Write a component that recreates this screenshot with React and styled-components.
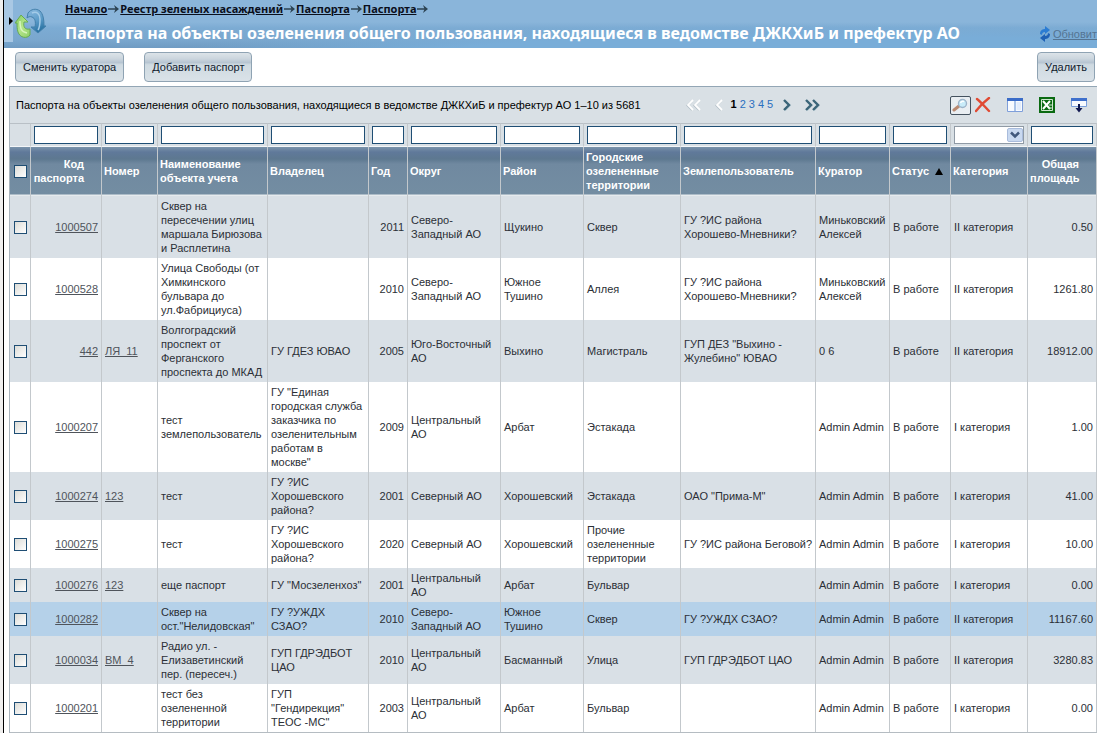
import React, { useState } from 'react'
import styled, { createGlobalStyle } from 'styled-components'

const columns = [
  { key: 'code', title: 'Код паспорта', width: 71, numeric: true },
  { key: 'number', title: 'Номер', width: 56 },
  { key: 'name', title: 'Наименование объекта учета', width: 110 },
  { key: 'owner', title: 'Владелец', width: 101 },
  { key: 'year', title: 'Год', width: 39, numeric: true },
  { key: 'okrug', title: 'Округ', width: 93 },
  { key: 'district', title: 'Район', width: 83 },
  { key: 'area', title: 'Городские озелененные территории', width: 97 },
  { key: 'landUser', title: 'Землепользователь', width: 135 },
  { key: 'curator', title: 'Куратор', width: 74 },
  { key: 'status', title: 'Статус', width: 61, sorted: true },
  { key: 'category', title: 'Категория', width: 77, select: true },
  { key: 'total', title: 'Общая площадь', width: 69, numeric: true },
]

const rows = [
  { code: '1000507', name: 'Сквер на пересечении улиц маршала Бирюзова и Расплетина', year: '2011', okrug: 'Северо-\nЗападный АО', district: 'Щукино', area: 'Сквер', landUser: 'ГУ ?ИС района\nХорошево-Мневники?', curator: 'Миньковский Алексей', category: 'II категория', total: '0.50' },
  { code: '1000528', name: 'Улица Свободы (от Химкинского бульвара до ул.Фабрициуса)', year: '2010', okrug: 'Северо-\nЗападный АО', district: 'Южное\nТушино', area: 'Аллея', landUser: 'ГУ ?ИС района\nХорошево-Мневники?', curator: 'Миньковский Алексей', category: 'II категория', total: '1261.80' },
  { code: '442', number: 'ЛЯ_11', name: 'Волгоградский\nпроспект от\nФерганского\nпроспекта до МКАД', owner: 'ГУ ГДЕЗ ЮВАО', year: '2005', okrug: 'Юго-Восточный\nАО', district: 'Выхино', area: 'Магистраль', landUser: 'ГУП ДЕЗ "Выхино -\nЖулебино" ЮВАО', curator: '0 6', category: 'II категория', total: '18912.00' },
  { code: '1000207', name: 'тест\nземлепользователь', owner: 'ГУ "Единая\nгородская служба\nзаказчика по\nозеленительным\nработам в\nмоскве"', year: '2009', okrug: 'Центральный\nАО', district: 'Арбат', area: 'Эстакада', curator: 'Admin Admin', category: 'I категория', total: '1.00' },
  { code: '1000274', number: '123', name: 'тест', owner: 'ГУ ?ИС\nХорошевского\nрайона?', year: '2001', okrug: 'Северный АО', district: 'Хорошевский', area: 'Эстакада', landUser: 'ОАО "Прима-М"', curator: 'Admin Admin', category: 'I категория', total: '41.00' },
  { code: '1000275', name: 'тест', owner: 'ГУ ?ИС\nХорошевского\nрайона?', year: '2020', okrug: 'Северный АО', district: 'Хорошевский', area: 'Прочие\nозелененные\nтерритории', landUser: 'ГУ ?ИС района Беговой?', curator: 'Admin Admin', category: 'I категория', total: '10.00' },
  { code: '1000276', number: '123', name: 'еще паспорт', owner: 'ГУ "Мосзеленхоз"', year: '2001', okrug: 'Центральный\nАО', district: 'Арбат', area: 'Бульвар', curator: 'Admin Admin', category: 'I категория', total: '0.00' },
  { code: '1000282', name: 'Сквер на\nост."Нелидовская"', owner: 'ГУ ?УЖДХ\nСЗАО?', year: '2010', okrug: 'Северо-\nЗападный АО', district: 'Южное\nТушино', area: 'Сквер', landUser: 'ГУ ?УЖДХ СЗАО?', curator: 'Admin Admin', category: 'II категория', total: '11167.60', active: true },
  { code: '1000034', number: 'ВМ_4', name: 'Радио ул. -\nЕлизаветинский\nпер. (пересеч.)', owner: 'ГУП ГДРЭДБОТ\nЦАО', year: '2010', okrug: 'Центральный\nАО', district: 'Басманный', area: 'Улица', landUser: 'ГУП ГДРЭДБОТ ЦАО', curator: 'Admin Admin', category: 'II категория', total: '3280.83' },
  { code: '1000201', name: 'тест без\nозелененной\nтерритории', owner: 'ГУП\n"Гендирекция"\nТЕОС -МС"', year: '2003', okrug: 'Центральный\nАО', district: 'Арбат', area: 'Бульвар', curator: 'Admin Admin', category: 'I категория', total: '0.00' },
]

const crumbs = ['Начало', 'Реестр зеленых насаждений', 'Паспорта', 'Паспорта']

const CrumbArrow = () => (
  <svg width="11" height="8" viewBox="0 0 11 8" aria-hidden="true">
    <path d="M0 4h9" fill="none" stroke="#2c4352" strokeWidth="1.5" />
    <path d="M6 0l5 4-5 4 1.500-4z" fill="#2c4352" />
  </svg>
)

const Logo = () => (
  <svg width="32" height="32" viewBox="0 0 32 32" aria-hidden="true">
    <defs>
      <linearGradient id="green" x1="0" y1="0" x2="1" y2="1">
        <stop offset="0" stopColor="#7cc95a" />
        <stop offset="0.5" stopColor="#b4e58a" />
        <stop offset="1" stopColor="#8fd069" />
      </linearGradient>
      <linearGradient id="blue" x1="0" y1="0" x2="0.4" y2="1">
        <stop offset="0" stopColor="#8dbbe0" />
        <stop offset="0.6" stopColor="#5b9bc8" />
        <stop offset="1" stopColor="#2b74a4" />
      </linearGradient>
    </defs>
    <path d="M13 5c3-4 8-5 12-2 3 3 4 8 4 15h2l-8 7-7-6h4c1-5 0-9-3-10-2-1-4 0-5 1z" fill="url(#blue)" stroke="#4380ab" />
    <path d="M17 5c5-2 8 1 8 6 0 4 0 8-2 11" fill="none" stroke="#a3cbe8" strokeWidth="1.500" />
    <path d="M6 7l7 7H9c-1 5 1 8 6 7v6c-3 4-10 3-12-3-1-3-1-6-1-9H0z" fill="url(#green)" stroke="#68ab53" />
    <path d="M5 13c0 7 1 11 7 12" fill="none" stroke="#d9f5bf" strokeWidth="1.500" />
  </svg>
)

const RefreshIcon = () => (
  <svg width="12" height="16" viewBox="0 0 12 16" aria-hidden="true">
    <path d="M1 8c0-4 3-5 5-5V0l5 4-5 4V6C4 6 3 7 3 9z" fill="#2b7cd3" />
    <path d="M11 8c0 4-3 5-5 5v3l-5-4 5-4v2c2 0 3-1 3-3z" fill="#1f61b5" />
  </svg>
)

const PageArrow = ({ double, back, muted }) => (
  <svg width={double ? 16 : 10} height="12" viewBox={double ? '0 0 16 12' : '0 0 10 12'} aria-hidden="true">
    <g transform={back ? `matrix(-1 0 0 1 ${double ? 16 : 10} 0)` : undefined}>
      {(double ? [0, 7] : [0]).map(x => (
        <g key={x} fill="none" strokeWidth="2">
          <path d={`M${x + 2} 2l4.500 4.500-4.500 4.500`} stroke={muted ? '#b3bfc7' : '#a9c3ce'} />
          <path d={`M${x + 1} 1l5 5-5 5`} stroke={muted ? '#fff' : '#3b6579'} strokeWidth={muted ? 1.8 : 2.4} />
        </g>
      ))}
    </g>
  </svg>
)

const SearchIcon = () => (
  <svg width="17" height="16" viewBox="0 0 17 16" aria-hidden="true">
    <path d="M2 13l5-4" stroke="#b98a72" strokeWidth="3" strokeLinecap="round" />
    <circle cx="10.500" cy="6.500" r="4" fill="#c9ecf9" stroke="#9db4c9" strokeWidth="1.400" />
    <path d="M8.500 6c1-2 2-2 3.500-1.500" fill="none" stroke="#fff" strokeWidth="1.500" />
  </svg>
)

const CrossIcon = () => (
  <svg width="16" height="16" viewBox="0 0 16 16" aria-hidden="true">
    <path d="M2 2c4 3 8 8 12 12M14 1C10 4 5 9 1 14" fill="none" stroke="#e04a33" strokeWidth="2.400" strokeLinecap="round" />
  </svg>
)

const ColumnsIcon = () => (
  <svg width="16" height="16" viewBox="0 0 16 16" aria-hidden="true">
    <path d="M.5 1.500h15v13H.5z" fill="#f8fbff" stroke="#7f9fda" />
    <path d="M0 1h16v3H0z" fill="#3a6cc8" />
    <path d="M8 4v10" stroke="#8fb0e0" strokeWidth="1.500" />
    <path d="M9.500 5H14v8H9.500z" fill="#e3edfb" />
  </svg>
)

const ExcelIcon = () => (
  <svg width="16" height="16" viewBox="0 0 16 16" aria-hidden="true">
    <path d="M0 0h16v16H0z" fill="#0b6a12" />
    <path d="M2.500 2.500h11v11h-11z" fill="#0b6a12" stroke="#cfe6cf" />
    <path d="M4 4l7 8M11 4l-7 8" stroke="#fff" strokeWidth="2" />
    <path d="M10 8h3M10 11h3" stroke="#cfe6cf" />
  </svg>
)

const ExportIcon = () => (
  <svg width="16" height="16" viewBox="0 0 16 16" aria-hidden="true">
    <path d="M.5 1.500h15v8H.5z" fill="#f8fbff" stroke="#7ba0dc" />
    <path d="M0 1h16v3H0z" fill="#3f70cc" />
    <path d="M8 7v7" stroke="#10184f" strokeWidth="2" />
    <path d="M4.500 11h7L8 15.500z" fill="#10184f" />
  </svg>
)

const App = () => {
  const [checked, setChecked] = useState({})
  const allChecked = rows.every(row => checked[row.code])

  const toggleAll = () => {
    const next = {}
    rows.forEach(row => { next[row.code] = !allChecked })
    setChecked(next)
  }

  return (
    <Page>
      <GlobalStyle />
      <Header>
        <Handle type="button" aria-label="Показать меню" />
        <LogoBox><Logo /></LogoBox>
        <Heading>
          <Crumbs>
            {crumbs.map((crumb, index) => (
              <React.Fragment key={index}>
                <a href="#">{crumb}</a>
                <CrumbArrow />
              </React.Fragment>
            ))}
          </Crumbs>
          <h1>Паспорта на объекты озеленения общего пользования, находящиеся в ведомстве ДЖКХиБ и префектур АО</h1>
        </Heading>
        <Refresh href="#"><RefreshIcon /><span>Обновит</span></Refresh>
      </Header>

      <Actions>
        <ActionButton type="button">Сменить куратора</ActionButton>
        <ActionButton type="button">Добавить паспорт</ActionButton>
        <Spacer />
        <ActionButton type="button">Удалить</ActionButton>
      </Actions>

      <Panel>
        <Toolbar>
          <h2>Паспорта на объекты озеленения общего пользования, находящиеся в ведомстве ДЖКХиБ и префектур АО 1–10 из 5681</h2>
          <Pager aria-label="Страницы">
            <IconButton type="button" aria-label="Первая" disabled><PageArrow double back muted /></IconButton>
            <IconButton type="button" aria-label="Предыдущая" disabled><PageArrow back muted /></IconButton>
            <Pages>
              <b>1</b>
              {[2, 3, 4, 5].map(page => <a key={page} href="#">{page}</a>)}
            </Pages>
            <IconButton type="button" aria-label="Следующая"><PageArrow /></IconButton>
            <IconButton type="button" aria-label="Последняя"><PageArrow double /></IconButton>
          </Pager>
          <Spacer />
          <Tools>
            <FilterTools>
              <SearchButton type="button" aria-label="Найти"><SearchIcon /></SearchButton>
              <IconButton type="button" aria-label="Сбросить"><CrossIcon /></IconButton>
            </FilterTools>
            <IconButton type="button" aria-label="Столбцы"><ColumnsIcon /></IconButton>
            <IconButton type="button" aria-label="Excel"><ExcelIcon /></IconButton>
            <IconButton type="button" aria-label="Выгрузить"><ExportIcon /></IconButton>
          </Tools>
        </Toolbar>

        <Table>
          <colgroup>
            <Col $width={21} />
            {columns.map(col => <Col key={col.key} $width={col.width} />)}
          </colgroup>
          <thead>
            <FilterRow>
              <td />
              {columns.map(col => (
                <td key={col.key}>
                  {col.select ? (
                    <SelectBox>
                      <select aria-label={col.title}><option /><option>I категория</option><option>II категория</option></select>
                      <SelectArrow>
                        <svg width="10" height="8" viewBox="0 0 10 8"><path d="M1 1.500l4 4 4-4" fill="none" stroke="#41587c" strokeWidth="2.500" /></svg>
                      </SelectArrow>
                    </SelectBox>
                  ) : (
                    <FilterInput type="text" aria-label={col.title} />
                  )}
                </td>
              ))}
            </FilterRow>
            <HeadRow>
              <CheckHead>
                <Check type="checkbox" aria-label="Выбрать все" checked={allChecked} onChange={toggleAll} />
              </CheckHead>
              {columns.map(col => (
                <HeadCell key={col.key} scope="col" $wide={col.numeric && col.key !== 'year'}>
                  {col.title}
                  {col.sorted && <SortMark />}
                </HeadCell>
              ))}
            </HeadRow>
          </thead>
          <tbody>
            {rows.map(row => (
              <Row key={row.code} $active={row.active}>
                <CheckCell>
                  <Check
                    type="checkbox"
                    aria-label={row.code}
                    checked={!!checked[row.code]}
                    onChange={() => setChecked({ ...checked, [row.code]: !checked[row.code] })}
                  />
                </CheckCell>
                {columns.map(col => (
                  <Cell key={col.key} $numeric={col.numeric}>
                    {(col.key === 'code' || col.key === 'number') && row[col.key]
                      ? <a href="#">{row[col.key]}</a>
                      : col.key === 'status' ? 'В работе' : row[col.key]}
                  </Cell>
                ))}
              </Row>
            ))}
          </tbody>
        </Table>
      </Panel>
    </Page>
  )
}

const GlobalStyle = createGlobalStyle`
* {
  box-sizing: border-box;
}
body {
  margin: 0;
  background: #f0efee;
  color: #2b2f36;
  font: 11px/14px "Liberation Sans", Arial, sans-serif;
  overflow-x: hidden;
}
button, input, select {
  font: inherit;
}
`

const Page = styled.div`
margin-left: 3px;
border-left: 1px solid #000;
background: #fff;
min-height: 100vh;
overflow: hidden;
`

const Header = styled.header`
display: flex;
height: 48px;
background:
  radial-gradient(ellipse 60% 30px at 75% 54px, #79add8 0, #79add8 60%, transparent 100%),
  linear-gradient(#8ab5da 0, #8ab5da 22px, #7cabd3 28px, #7aa7ce 40px, #6f9bc2 48px);
`

const Handle = styled.button`
flex: 0 0 9px;
height: 42px;
padding: 0;
border: none;
background: #a9c8e4;
display: flex;
align-items: center;
justify-content: flex-end;
cursor: pointer;
&::before {
  content: "";
  border: 4px solid transparent;
  border-left-color: #000;
  border-right: none;
}
`

const LogoBox = styled.div`
flex: 0 0 52px;
padding: 8px 0 0 2px;
`

const Heading = styled.div`
flex: 1;
white-space: nowrap;
font-family: "Noto Sans", Tahoma, sans-serif;
h1 {
  margin: 5px 0 0;
  font-size: 16px;
  line-height: 22px;
  color: #fff;
}
`

const Crumbs = styled.nav`
display: flex;
align-items: center;
gap: 1px;
padding-top: 1px;
line-height: 16px;
font-weight: bold;
a {
  color: #0a0f1c;
}
`

const Refresh = styled.a`
display: flex;
align-items: center;
gap: 2px;
height: 18px;
margin-top: 25px;
color: #547492;
`

const Actions = styled.div`
display: flex;
gap: 20px;
padding: 4px 2px 4px 11px;
`

const ActionButton = styled.button`
height: 30px;
padding: 0 7px;
border: 1px solid #8fa3b3;
border-radius: 4px;
background: linear-gradient(#dce3e8 0, #ccd6de 20%, #b7c5d2 34%, #cfdae1 42%, #dae2e8 100%);
color: #10202e;
cursor: pointer;
`

const Spacer = styled.div`
flex: 1;
`

const Panel = styled.section`
margin-left: 5px;
border-top: 1px solid #93a6b5;
border-left: 1px solid #a9b4bd;
`

const Toolbar = styled.div`
display: flex;
align-items: center;
height: 36px;
padding: 0 10px 0 6px;
background: #d9e0e5;
h2 {
  margin: 0 44px 0 0;
  font-size: 11px;
  font-weight: normal;
  white-space: nowrap;
  color: #000;
}
`

const Pager = styled.nav`
display: flex;
align-items: center;
gap: 12px;
`

const Pages = styled.div`
display: flex;
gap: 3px;
margin: 0 -2px 2px -4px;
a {
  color: #2a6fc0;
  text-decoration: none;
}
b {
  color: #000;
}
`

const Tools = styled.div`
display: flex;
align-items: center;
gap: 16px;
`

const FilterTools = styled.div`
display: flex;
align-items: center;
gap: 4px;
`

const IconButton = styled.button`
display: flex;
padding: 0;
border: none;
background: none;
cursor: pointer;
`

const SearchButton = styled(IconButton)`
width: 21px;
height: 19px;
align-items: center;
justify-content: center;
border: 1px solid #44525f;
border-radius: 2px;
background: #e9eef2;
`

const Table = styled.table`
width: 100%;
table-layout: fixed;
border-collapse: separate;
border-spacing: 0;
border-bottom: 1px solid #b5bcc2;
td, th {
  border-right: 1px solid #c3c8cc;
}
`

const Col = styled.col`
width: ${({ $width }) => $width}px;
`

const FilterRow = styled.tr`
background: #d9e0e5;
td {
  height: 24px;
  padding: 0 3px;
  border-top: 1px solid #b9c0c6;
  border-bottom: 1px solid #f4f6f8;
  vertical-align: middle;
}
`

const FilterInput = styled.input`
display: block;
width: 100%;
height: 18px;
padding: 0 2px;
border: 1px solid #1f4e74;
background: #fff;
`

const SelectBox = styled.div`
position: relative;
select {
  display: block;
  width: 100%;
  height: 18px;
  padding: 0 18px 0 2px;
  border: 1px solid #8f9aa5;
  border-radius: 0;
  background: #fff;
  appearance: none;
}
`

const SelectArrow = styled.span`
position: absolute;
top: 2px;
right: 1px;
width: 16px;
height: 14px;
display: flex;
align-items: center;
justify-content: center;
border: 1px solid #a9bcdc;
border-radius: 2px;
background: #c9d9f0;
pointer-events: none;
`

const HeadRow = styled.tr`
height: 49px;
background: linear-gradient(#7b94ab 0, #60799a 5px, #5d7890 12px, #7089a0 17px, #738da2 47px, #e6ebee 48px);
`

const HeadCell = styled.th`
padding: 0 ${({ $wide }) => ($wide ? 17 : 2)}px 2px 2px;
text-align: ${({ $wide }) => ($wide ? 'right' : 'left')};
color: #fff;
`

const CheckHead = styled.th`
padding: 0;
`

const SortMark = styled.span`
display: inline-block;
margin-left: 6px;
border: 4px solid transparent;
border-top: none;
border-bottom: 7px solid #000;
`

const Check = styled.input`
appearance: none;
display: block;
width: 13px;
height: 13px;
margin: 0 auto;
border: 1px solid #1f4e74;
background: linear-gradient(135deg, #dcdcd7, #fff);
&:checked {
  background: #1f4e74;
}
`

const Row = styled.tr`
background: ${({ $active }) => ($active ? '#b5d1e9' : '#fff')};
&:nth-child(odd) {
  background: #d9e0e6;
}
`

const Cell = styled.td`
padding: 3px ${({ $numeric }) => ($numeric ? 3 : 1)}px 3px 3px;
text-align: ${({ $numeric }) => ($numeric ? 'right' : 'left')};
vertical-align: middle;
white-space: pre-line;
a {
  color: #4f545b;
}
`

const CheckCell = styled.td`
padding: 0;
`

export default App
